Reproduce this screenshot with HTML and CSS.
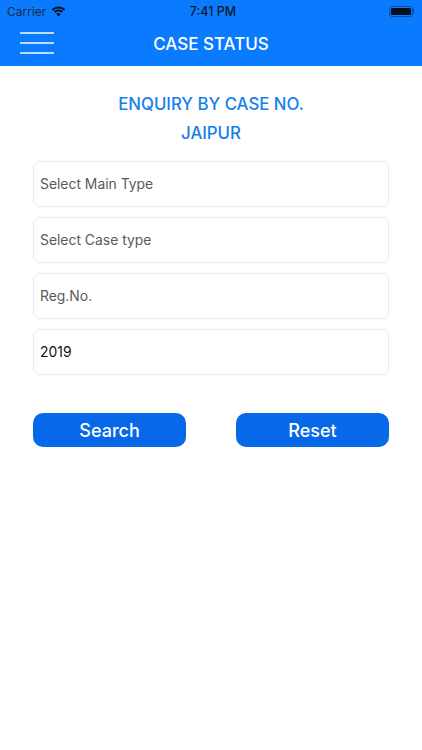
FILE: index.html
```html
<!DOCTYPE html>
<html lang="en">
<head>
    <meta charset="UTF-8">
    <meta name="viewport" content="width=device-width, initial-scale=1.0">
    <title>Case Status</title>
    <link rel="stylesheet" href="styles.css">
</head>
<body>
    <div class="topbar">
        <div class="statusbar">
            <div class="status-left">
                <span>Carrier</span>
                <svg class="wifi" width="15" height="11" viewBox="0 0 15 11">
                    <path d="M7.500 2.600c2.100 0 4 .8 5.400 2.100l1.400-1.500C12.500 1.500 10.100.4 7.500.4S2.500 1.500.7 3.200l1.400 1.500C3.500 3.400 5.400 2.600 7.500 2.600z" fill="#0b1320"/>
                    <path d="M7.500 5.600c1.200 0 2.300.5 3.100 1.200l1.400-1.500C10.800 4.200 9.200 3.500 7.500 3.500s-3.300.7-4.500 1.800l1.400 1.500c.8-.7 1.900-1.200 3.100-1.200z" fill="#0b1320"/>
                    <path d="M7.500 10.600l2.300-2.600c-.6-.5-1.400-.9-2.300-.9s-1.700.4-2.300.9z" fill="#0b1320"/>
                </svg>
            </div>
            <div class="status-time">7:41 PM</div>
            <div class="status-right">
                <div class="battery"><div class="battery-level"></div></div>
                <div class="battery-cap"></div>
            </div>
        </div>
        <div class="navbar">
            <div class="menu-icon">
                <span></span>
                <span></span>
                <span></span>
            </div>
            <h1>CASE STATUS</h1>
        </div>
    </div>

    <div class="content">
        <h2>ENQUIRY BY CASE NO.</h2>
        <h2>JAIPUR</h2>

        <form class="case-form">
            <div class="field placeholder">Select Main Type</div>
            <div class="field placeholder">Select Case type</div>
            <div class="field placeholder">Reg.No.</div>
            <div class="field">2019</div>

            <div class="buttons">
                <button type="button">Search</button>
                <button type="button">Reset</button>
            </div>
        </form>
    </div>
</body>
</html>
```

FILE: styles.css
```css
* {
    box-sizing: border-box;
    margin: 0;
    padding: 0;
    font-family: Inter, "Liberation Sans", sans-serif;
}

body {
    background: white;
    width: 422px;
    height: 750px;
    overflow: hidden;
}

.topbar {
    background: #0a7aff;
    height: 66px;
}

.statusbar {
    height: 22px;
    padding: 0 7px;
    display: grid;
    grid-template-columns: 1fr auto 1fr;
    align-items: center;
    font-size: 12px;
    color: #1a2a44;
}

.status-left {
    display: flex;
    align-items: center;
    gap: 5px;
}

.status-time {
    color: #0d1a2e;
    font-size: 12.500px;
    font-weight: 500;
    margin-left: 4px;
}

.status-right {
    display: flex;
    align-items: center;
    justify-content: flex-end;
    padding-right: 1px;
}

.battery {
    width: 24px;
    height: 11px;
    border: 1px solid #0a4fa8;
    border-radius: 3px;
    padding: 1px;
}

.battery-level {
    height: 100%;
    background: #05101f;
    border-radius: 1px;
}

.battery-cap {
    width: 1px;
    height: 4px;
    background: #0a4fa8;
}

.navbar {
    height: 44px;
    position: relative;
    display: flex;
    align-items: center;
    justify-content: center;
}

.navbar h1 {
    color: white;
    font-size: 17px;
    font-weight: 500;
}

.menu-icon {
    position: absolute;
    left: 20px;
    top: 10px;
    width: 34px;
    display: flex;
    flex-direction: column;
    gap: 8px;
}

.menu-icon span {
    display: block;
    height: 2px;
    background: #b9dcff;
}

.content {
    padding: 28px 33px 0;
}

h2 {
    color: #1480ea;
    font-size: 16.800px;
    font-weight: 500;
    text-align: center;
    line-height: 20px;
    margin-bottom: 9px;
}

.case-form {
    margin-top: 18px;
}

.field {
    height: 46px;
    border: 1px solid #ebebeb;
    border-radius: 6px;
    margin-bottom: 10px;
    padding: 0 6px 1px;
    display: flex;
    align-items: center;
    font-size: 13.900px;
    color: #111;
}

.placeholder {
    color: #5a5a5a;
}

.buttons {
    display: flex;
    justify-content: space-between;
    margin-top: 38px;
}

button {
    width: 153px;
    height: 34px;
    background: #0768e8;
    color: white;
    border: none;
    border-radius: 10px;
    font-size: 18px;
    font-weight: 500;
}
```
